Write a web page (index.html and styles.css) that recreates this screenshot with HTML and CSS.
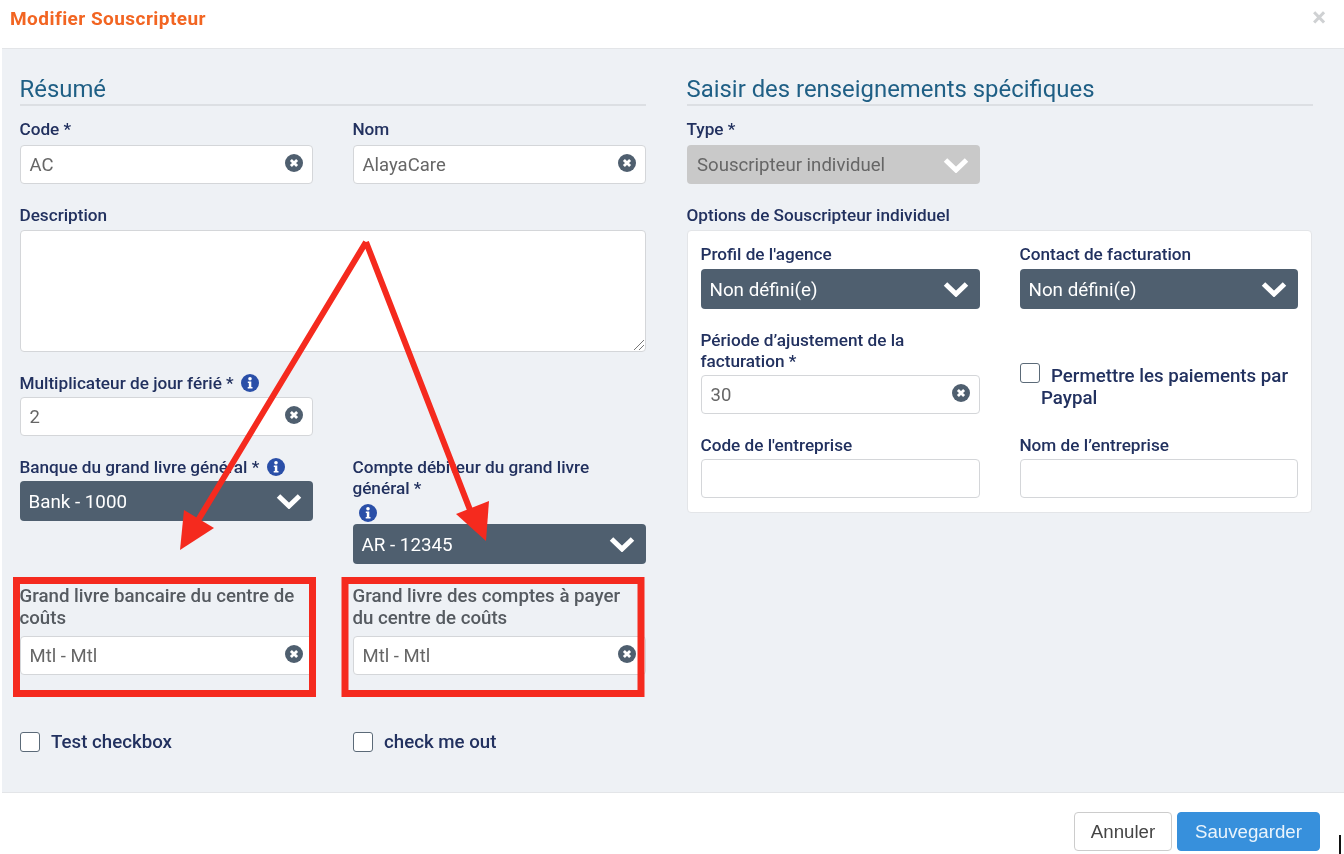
FILE: index.html
```html
<!DOCTYPE html>
<html lang="fr">
<head>
<meta charset="utf-8">
<title>Modifier Souscripteur</title>
<link rel="stylesheet" href="styles.css">
</head>
<body>
<svg width="0" height="0" class="defs">
  <symbol id="clear" viewBox="0 0 18 18"><circle cx="9" cy="9" r="9" fill="#4f5f6f"/><path d="M5.9 5.9l6.2 6.2M12.100 5.900l-6.200 6.200" stroke="#fff" stroke-width="2.800" fill="none"/></symbol>
  <symbol id="chev" viewBox="0 0 26 16"><path d="M2.500 3l10.500 10L23.500 3" stroke="#fff" stroke-width="5" fill="none"/></symbol>
  <symbol id="info" viewBox="0 0 18 18"><circle cx="9" cy="9" r="9" fill="#2a4fa8"/><circle cx="9" cy="4.700" r="1.800" fill="#fff"/><path d="M6.800 7.500h3.500v5.500h1.200v1.500h-4.800V13h1.100V9H6.800z" fill="#fff"/></symbol>
</svg>
<div class="modal">
  <header class="head">
    <h1 class="title">Modifier Souscripteur</h1>
    <span class="close">×</span>
  </header>
  <main class="content">
    <section class="col">
      <h2 class="heading">Résumé</h2>
      <div class="row r-first">
        <div class="field"><label class="lab">Code *</label><div class="inp"><span>AC</span><svg class="x"><use href="#clear"/></svg></div></div>
        <div class="field"><label class="lab">Nom</label><div class="inp"><span>AlayaCare</span><svg class="x"><use href="#clear"/></svg></div></div>
      </div>
      <div class="field one g4"><label class="lab">Description</label><div class="area"><svg class="grip" width="12" height="12" viewBox="0 0 12 12"><path d="M1 11L11 1M6 11l5-5" stroke="#777" stroke-width="1" fill="none"/></svg></div></div>
      <div class="row r-mult g3">
        <div class="field"><label class="lab">Multiplicateur de jour férié * <svg class="i"><use href="#info"/></svg></label><div class="inp"><span>2</span><svg class="x"><use href="#clear"/></svg></div></div>
      </div>
      <div class="row r-bank g3">
        <div class="field"><label class="lab">Banque du grand livre général * <svg class="i"><use href="#info"/></svg></label><div class="sel"><span>Bank - 1000</span><svg class="v"><use href="#chev"/></svg></div></div>
        <div class="field"><label class="lab">Compte débiteur du grand livre général *<span class="iline"><svg class="i"><use href="#info"/></svg></span></label><div class="sel"><span>AR - 12345</span><svg class="v"><use href="#chev"/></svg></div></div>
      </div>
      <div class="row r-cost">
        <div class="field"><label class="lab grey">Grand livre bancaire du centre de coûts</label><div class="inp"><span>Mtl - Mtl</span><svg class="x"><use href="#clear"/></svg></div></div>
        <div class="field"><label class="lab grey">Grand livre des comptes à payer du centre de coûts</label><div class="inp"><span>Mtl - Mtl</span><svg class="x"><use href="#clear"/></svg></div></div>
      </div>
      <div class="row r-check">
        <div class="chk"><i class="box"></i><span>Test checkbox</span></div>
        <div class="chk"><i class="box"></i><span>check me out</span></div>
      </div>
    </section>
    <section class="col">
      <h2 class="heading">Saisir des renseignements spécifiques</h2>
      <div class="row r-first">
        <div class="field"><label class="lab">Type *</label><div class="sel off"><span>Souscripteur individuel</span><svg class="v"><use href="#chev"/></svg></div></div>
      </div>
      <div class="field one g4"><label class="lab">Options de Souscripteur individuel</label>
        <div class="panel">
          <div class="prow g4">
            <div class="field"><label class="lab">Profil de l'agence</label><div class="sel"><span>Non défini(e)</span><svg class="v"><use href="#chev"/></svg></div></div>
            <div class="field"><label class="lab">Contact de facturation</label><div class="sel"><span>Non défini(e)</span><svg class="v"><use href="#chev"/></svg></div></div>
          </div>
          <div class="prow g3">
            <div class="field"><label class="lab">Période d’ajustement de la facturation *</label><div class="inp"><span>30</span><svg class="x"><use href="#clear"/></svg></div></div>
            <div class="pay"><i class="box"></i><span>Permettre les paiements par Paypal</span></div>
          </div>
          <div class="prow g3">
            <div class="field"><label class="lab">Code de l'entreprise</label><div class="inp"></div></div>
            <div class="field"><label class="lab">Nom de l’entreprise</label><div class="inp"></div></div>
          </div>
        </div>
      </div>
    </section>
  </main>
  <footer class="foot">
    <button class="btn cancel">Annuler</button>
    <button class="btn save">Sauvegarder</button>
  </footer>
</div>
<svg class="marks" width="1344" height="854" viewBox="0 0 1344 854">
  <g fill="none" stroke="#f52a1e" stroke-width="7">
    <rect x="16.500" y="580.500" width="296" height="113"/>
    <rect x="345" y="580.500" width="296" height="113"/>
  </g>
  <g stroke="#f52a1e" stroke-width="6" fill="#f52a1e">
    <path d="M366 242L197 522M366 242L472 515" fill="none"/>
    <path d="M180 550L214 528L184 510z" stroke="none"/>
    <path d="M486 541L456 514L489 501z" stroke="none"/>
  </g>
</svg>
<span class="cursor"></span>
</body>
</html>
```

FILE: styles.css
```css
* { box-sizing: border-box; }
html, body { margin: 0; padding: 0; height: 854px; overflow: hidden; background: #fff; }
body { font-family: Roboto, "Liberation Sans", sans-serif; position: relative; }
.defs { position: absolute; }
.modal { margin-left: 2px; height: 854px; display: flex; flex-direction: column; filter: blur(.35px); }
.head { height: 49px; flex: none; display: flex; justify-content: space-between; align-items: flex-start; border-bottom: 1px solid #e3e5e8; padding: 8px 18px 0 8px; }
.title { margin: 0; font-size: 19px; letter-spacing: .45px; line-height: 22px; font-weight: 700; color: #f26522; }
.close { font-size: 26px; line-height: 18px; font-weight: 700; color: #cfd1d3; }
.content { flex: 1; background: #eef1f5; display: flex; gap: 41px; padding: 26px 29px 0 18px; }
.col { width: 626px; flex: none; }
.heading { margin: 0 0 13px; height: 31px; text-indent: -.5px; font-size: 23.900px; line-height: 28px; font-weight: 400; color: #1f5f85; border-bottom: 2px solid #dcdfe3; }
.row { display: grid; grid-template-columns: 293px 293px; column-gap: 40px; }
.r-first { margin-bottom: 21px; }
.one { margin-bottom: 21px; }
.r-mult { margin-bottom: 21px; }
.r-bank { margin-bottom: 21px; }
.r-bank .field:first-child { align-self: start; }
.r-cost { margin-bottom: 57px; }
.r-cost .lab { font-size: 18.700px; line-height: 22px; margin-bottom: 7px; padding-right: 14px; }
.lab { display: block; margin-left: -.6px; font-size: 17.200px; line-height: 21px; font-weight: 500; color: #22315f; margin-bottom: 5px; }
.g4 .lab { margin-bottom: 4px; }
.g3 .lab { margin-bottom: 3px; }
.grey { color: #555a60; }
.iline { display: block; height: 22px; padding: 4px 0 0 7px; }
.i { width: 18px; height: 18px; vertical-align: -3px; margin-left: 3px; }
.iline .i { margin-left: 0; }
.inp { height: 39px; background: #fff; border: 1px solid #d4d6d9; border-radius: 4px; display: flex; align-items: center; justify-content: space-between; padding: 0 9.500px 0 8.500px; font-size: 18.500px; color: #666; }
.inp span { padding-top: 1px; }
.x { width: 18px; height: 18px; margin-bottom: 4px; margin-left: auto; }
.area { height: 122px; background: #fff; border: 1px solid #d4d6d9; border-radius: 4px; display: flex; justify-content: flex-end; align-items: flex-end; }
.grip { display: block; }
.sel { height: 40px; background: #4f5f6f; border-radius: 4px; display: flex; align-items: center; justify-content: space-between; padding: 0 11px 0 8.500px; font-size: 18.800px; color: #fff; }
.sel span { padding-top: 1px; }
.v { width: 26px; height: 16px; }
.off { height: 39px; background: #c9c9c9; color: #666; font-size: 18.600px; padding-left: 10px; }
.panel { background: #fff; border: 1px solid #e3e5e8; border-radius: 4px; padding: 13px 14px 14px 13px; height: 283px; width: 625px; }
.prow { display: grid; grid-template-columns: 279px 278px; column-gap: 40px; margin-bottom: 21px; }
.prow:last-child { margin-bottom: 0; }
.box { display: inline-block; width: 20px; height: 20px; background: #fff; border: 1px solid #5b6a78; border-radius: 3px; flex: none; }
.chk { display: flex; align-items: center; gap: 11px; font-size: 18.700px; font-weight: 500; color: #22315f; height: 20px; }
.pay { margin-top: 33px; padding-left: 21px; text-indent: -21px; font-size: 18.700px; line-height: 22px; font-weight: 500; color: #22315f; }
.pay .box { margin-right: 11px; vertical-align: -1px; }
.foot { height: 62px; flex: none; border-top: 1px solid #e3e5e8; background: #fff; display: flex; justify-content: flex-end; align-items: flex-start; gap: 5px; padding: 19px 24px 0 0; }
.btn { height: 39px; border-radius: 4px; font-family: "Liberation Sans", Arial, sans-serif; font-size: 18.700px; padding: 0; }
.cancel { width: 98px; background: #fff; border: 1px solid #ccc; color: #444; }
.save { width: 143px; background: #3790dc; border: 1px solid #3790dc; color: #eaf4fc; }
.marks { position: absolute; left: 0; top: 0; pointer-events: none; }
.cursor { position: absolute; left: 1339px; top: 835px; width: 2px; height: 19px; background: #111; }
```
